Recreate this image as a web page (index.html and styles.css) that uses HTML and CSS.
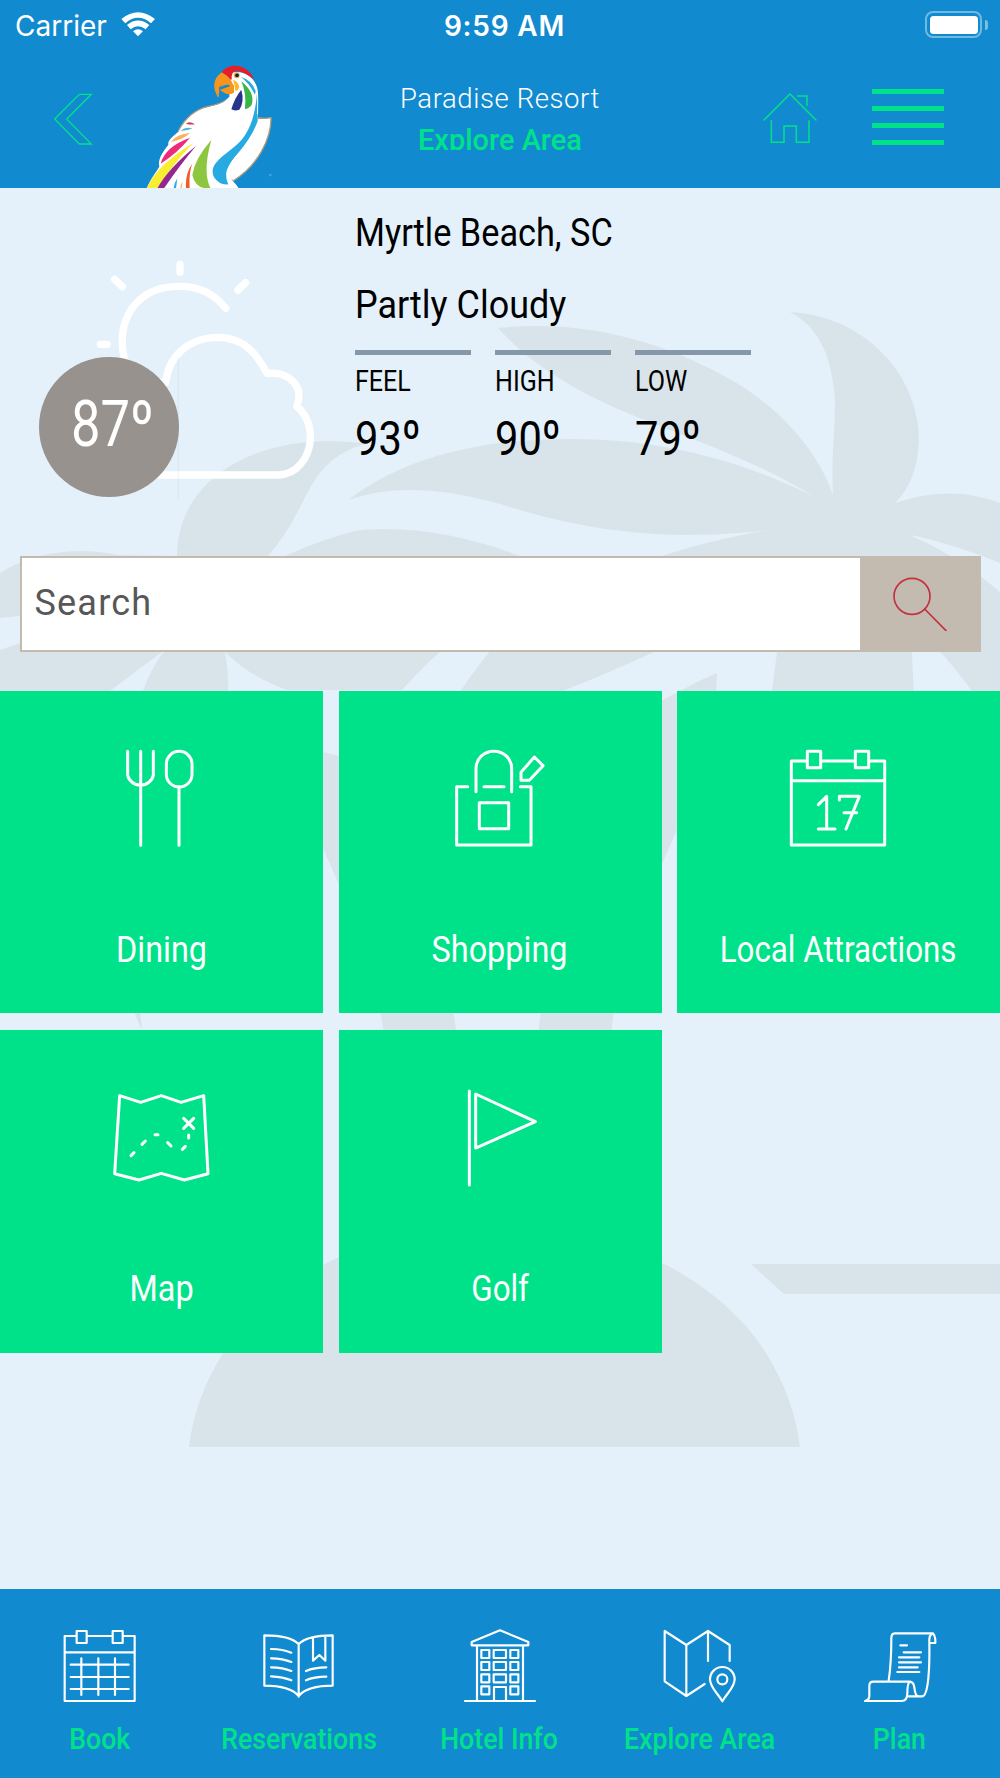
FILE: index.html
```html
<!DOCTYPE html>
<html lang="en">
<head>
<meta charset="utf-8">
<title>Explore Area</title>
<link rel="stylesheet" href="styles.css">
</head>
<body>
<div class="app">
  <svg class="backdrop" viewBox="0 0 1000 1778" aria-hidden="true">
    <!-- right palm -->
    <path d="M790 312C865 316 919 375 919 440C918 468 910 488 895 503C935 490 968 491 1000 503V563C968 550 936 540 910 535C950 553 978 573 1000 592V700H978C965 680 945 656 920 630H912V652L914 700H771L777 652V640L700 630Q630 665 555 694L540 700H455Q470 675 495 645Q560 590 662 556C705 542 750 532 795 526C755 533 720 535 690 535C620 535 560 523 500 504C440 487 390 485 348 500C390 468 440 451 500 443C620 430 720 450 815 497C760 464 715 448 650 422C575 394 528 362 498 328C590 318 672 345 735 382C785 412 820 456 833 495C831 460 835 430 835 402C832 350 815 325 790 312Z"/>
    <path d="M717 673Q700 680 682 690L662 700V864L677 830V700H716Z"/>
    <!-- left palm -->
    <path d="M177 556C178 480 250 441 330 441L368 443C320 455 310 490 297 513Q284 538 268 556H285Q320 540 355 531C410 524 470 537 520 556V600Q465 620 402 690H287Q250 677 225 652Q229 672 228 691H143Q150 670 165 650Q140 668 110 691H0V650L20 643V616L0 618V573Q22 559 45 555Q80 547 118 555Z"/>
    <path d="M323 752L339 756V885L323 848Z"/>
    <path d="M134 1010H140L142 1029Q138 1024 134 1010ZM380 1010H453L457 1035H384ZM541 1010H614L611 1035H538Z"/>
    <!-- island and shoreline -->
    <path d="M189 1447C193 1413 205 1382 223 1353C245 1317 285 1284 323 1265Q400 1225 494 1225Q589 1225 666 1265C704 1284 744 1317 766 1353C784 1382 796 1413 800 1447ZM751 1264H1000V1294H784Z"/>
  </svg>

  <header class="header">
    <div class="status">
      <div class="status-left">
        <span>Carrier</span>
        <svg class="wifi" viewBox="362 36 103 74"><path d="M363 57Q413 16 464 57L452 70Q413 37 375 70ZM380 75Q413 48 447 75L436 88Q413 70 391 88ZM398 94Q413 82 428 94L413 109Z"/></svg>
      </div>
      <div class="status-time">9:59 AM</div>
      <div class="battery"><span class="battery-body"></span><span class="battery-tip"></span></div>
    </div>
    <div class="bar">
      <svg class="back" viewBox="162 278 116 156"><path d="M164 356L238 282H274L200 356L274 431H238Z"/></svg>
      <svg class="logo" viewBox="0 0 480 415">
        <path fill="#fff" stroke="#b59a7a" stroke-width="4" d="M385 204L408 205L423 203C424 265 385 345 310 392L280 380Z"/>
        <path fill="#fff" d="M50 415C62 385 75 372 88 350C83 330 95 310 115 285C112 270 130 258 145 245C165 205 195 178 235 170C262 165 282 158 298 140L300 70C340 55 383 85 384 130C386 165 383 200 384 215L416 207C410 272 373 342 303 386C310 396 320 403 326 415Z"/>
        <path fill="none" stroke="#b59a7a" stroke-width="3.500" d="M145 242C165 205 195 178 235 169C258 164 274 160 286 151"/>
        <path fill="#ec1c24" d="M275 67C290 43 330 40 352 61Q367 73 371 88C352 72 335 63 318 62Q304 65 305 87L303 91Q291 75 275 67Z"/>
        <path fill="#f7941d" d="M275 67Q291 75 303 91L309 103Q285 92 267 113Q269 124 265 144C247 115 247 88 275 67ZM270 119Q285 114 301 108L312 104V128Q292 140 270 119Z"/>
        <path fill="#118acf" d="M271 117Q281 94 305 100L300 108Q285 110 271 117Z"/>
        <path fill="#f7941d" d="M276 103Q288 94 306 99L311 107L303 108Q288 98 272 112Z"/>
        <path fill="#fbb829" d="M309 89Q326 95 328 112Q326 120 316 123Q315 105 309 89Z"/>
        <circle cx="320" cy="76" r="9" fill="#d8b45a"/><circle cx="321" cy="76" r="5.500" fill="#222"/>
        <path fill="#27348b" d="M334 119Q344 155 328 179Q314 184 304 178Q313 145 334 119Z"/>
        <path fill="#39b54a" d="M334 94Q376 128 365 164Q357 176 345 177Q350 130 334 94Z"/>
        <path fill="#27aae1" d="M333 81Q367 91 377 124L375 134Q358 100 333 81ZM381 130C382 180 382 205 377 224C362 254 342 287 322 310C290 346 281 372 295 403Q268 406 252 382C232 340 290 314 325 280C362 244 376 190 381 130Z"/>
        <path fill="#27aae1" d="M383 190V214Q365 262 325 308Q300 335 290 360Q280 340 310 300Q360 254 383 190Z"/>
        <path fill="#c4404f" d="M168 221Q178 211 195 223Q180 225 168 221Z"/>
        <path fill="#4eb5d5" d="M152 242Q166 229 188 235Q172 243 152 242Z"/>
        <path fill="#fbb15e" d="M122 276Q140 252 180 249Q160 269 122 276Z"/>
        <path fill="#ee2a7b" d="M92 341Q105 290 180 263Q142 309 92 341Z"/>
        <path fill="#f9ed32" d="M51 415Q75 350 190 278Q126 345 82 415Z"/>
        <path fill="#92278f" d="M82 415Q115 355 198 288Q150 345 102 415Z"/>
        <path fill="#8dc63f" d="M244 270Q217 365 241 414Q197 420 187 375Q195 325 244 270Z"/>
        <path fill="#f15a29" d="M187 341Q176 370 179 415H168Q165 370 187 341Z"/>
        <path fill="#27aae1" d="M142 385Q132 400 131 415H138Z"/>
        <path fill="#fbb15e" d="M158 394Q151 405 151 415H155Z"/>
        <circle cx="421" cy="375" r="4" fill="#46a5dc"/>
      </svg>
      <div class="titles">
        <div class="resort">Paradise Resort</div>
        <div class="screen"><span class="w-screen">Explore Area</span></div>
      </div>
      <div class="actions">
        <svg class="home" viewBox="788 280 162 154"><path d="M791 361L869 283L947 361M892 289H920V317M813 363V428H851V379H888V428H926V363"/></svg>
        <div class="menu"><i></i><i></i><i></i><i></i></div>
      </div>
    </div>
  </header>

  <section class="weather">
    <div class="sky">
      <svg class="cloud" viewBox="0 0 1065 1098">
        <path d="M374 505C345 400 400 285 540 286Q626 286 677 352M540 220V244M344 265L367 287M737 275L714 297M301 460H322M470 574H497C505 500 560 440 655 439C735 440 770 490 801 547C865 540 915 585 890 646C925 675 932 715 931 745C928 800 890 851 835 852H480"/>
        <path class="seam" d="M535 500V922"/>
      </svg>
      <div class="temp"><span class="w-temp">87º</span></div>
    </div>
    <div class="report">
      <div class="line"><span class="w-place">Myrtle Beach, SC</span></div>
      <div class="line"><span class="w-sky">Partly Cloudy</span></div>
      <div class="stats">
        <div class="stat"><div class="stat-label"><span>FEEL</span></div><div class="stat-value"><span>93º</span></div></div>
        <div class="stat"><div class="stat-label"><span>HIGH</span></div><div class="stat-value"><span>90º</span></div></div>
        <div class="stat"><div class="stat-label"><span>LOW</span></div><div class="stat-value"><span>79º</span></div></div>
      </div>
    </div>
  </section>

  <div class="search">
    <div class="search-field">Search</div>
    <div class="search-button">
      <svg viewBox="1180 1160 162 163"><circle cx="1237" cy="1218" r="54"/><path d="M1275 1256L1339 1321"/></svg>
    </div>
  </div>

  <main class="tiles">
    <div class="tile">
      <svg viewBox="98 90 290 290"><path d="M142 94V165A39 36 0 0 0 219 165V94M181 94V376M296 200V376"/><rect x="258" y="94" width="77" height="107" rx="38.500"/></svg>
      <div class="tile-label"><span class="w-short">Dining</span></div>
    </div>
    <div class="tile">
      <svg viewBox="1116 90 290 290"><path d="M1188 215V145A53 51 0 0 1 1295 145V215M1163 200H1130V375H1353V200H1321M1212 200H1272M1198 248H1286V326H1198ZM1363 111L1389 137L1348 181H1323V157Z"/></svg>
      <div class="tile-label"><span class="w-short">Shopping</span></div>
    </div>
    <div class="tile">
      <svg viewBox="630 90 290 290"><path d="M682 123H634V375H914V123H867M723 123H826M634 182H914M682 94H722V143H682ZM826 94H866V143H826ZM715 254L740 229V327M715 327H765M778 240V229H838L798 327M792 278H830"/></svg>
      <div class="tile-label"><span>Local Attractions</span></div>
    </div>
    <div class="tile">
      <svg viewBox="98 90 290 290"><path d="M118 107L181 127L243 107L302 127L370 107L383 341L312 360L243 340L176 360L103 341ZM152 287L161 278M185 253L195 243M224 224H233M262 248L272 258M306 268L315 259M325 225V234M310 175L340 205M340 175L310 205"/></svg>
      <div class="tile-label"><span class="w-short">Map</span></div>
    </div>
    <div class="tile">
      <svg viewBox="1116 90 290 290"><path d="M1168 93V375M1187 102L1366 185L1187 264Z"/></svg>
      <div class="tile-label"><span>Golf</span></div>
    </div>
  </main>

  <nav class="nav">
    <div class="nav-item">
      <svg viewBox="193 150 216 216"><path d="M230 168H195V363H405V168H370M262 168H338M195 217H405M231 153H261V189H231ZM339 153H369V189H339ZM213 254H387M213 291H387M213 327H387M245 235V345M296 235V345M346 235V345"/></svg>
      <div class="nav-label"><span>Book</span></div>
    </div>
    <div class="nav-item">
      <svg viewBox="792 150 216 216"><path d="M896 350V192Q870 166 793 166V317Q870 317 896 348Q922 317 998 317V166Q922 166 896 192M939 174V242L958 225L976 242V172M813 207Q850 208 874 218M813 235Q850 236 874 246M813 262Q850 263 874 273M813 289Q850 291 874 301M918 273Q942 262 979 262M918 301Q942 290 979 290"/></svg>
      <div class="nav-label"><span>Reservations</span></div>
    </div>
    <div class="nav-item">
      <svg viewBox="1392 150 216 216"><path d="M1395 363H1605M1431 197V363M1569 197V363M1500 151L1415 186V196H1585V186ZM1482 363V321H1518V363M1444 210H1468V234H1444ZM1481 210H1518V234H1481ZM1531 210H1555V234H1531ZM1444 246H1468V270H1444ZM1481 246H1518V270H1481ZM1531 246H1555V270H1531ZM1444 283H1468V307H1444ZM1481 283H1518V307H1481ZM1531 283H1555V307H1531ZM1444 319H1468V343H1444ZM1531 319H1555V343H1531Z"/></svg>
      <div class="nav-label"><span>Hotel Info</span></div>
    </div>
    <div class="nav-item">
      <svg viewBox="493 150 216 216"><path d="M625 243V153L560 195L495 153V304L560 348L615 312M560 195V348M625 153L690 195V243M668 364C655 340 631 323 631 298A37 37 0 0 1 705 298C705 323 681 340 668 364Z"/><circle cx="668" cy="298" r="15"/></svg>
      <div class="nav-label"><span>Explore Area</span></div>
    </div>
    <div class="nav-item">
      <svg viewBox="1092 150 216 216"><path d="M1166 302Q1174 250 1174 175Q1174 160 1184 160H1296Q1307 162 1306 189H1290M1299 160Q1286 163 1288 190C1289 250 1287 349 1266 349H1226M1095 363Q1109 360 1108 345V318Q1108 305 1120 305H1228Q1241 305 1243 322Q1246 348 1254 348M1095 363H1205Q1222 363 1222 340Q1222 307 1231 305M1201 196H1221M1211 217H1263M1197 232H1258M1197 247H1263M1197 262H1253M1192 276H1258"/></svg>
      <div class="nav-label"><span>Plan</span></div>
    </div>
  </nav>
</div>
</body>
</html>
```
FILE: styles.css
```css
* { box-sizing: border-box; }

body {
  margin: 0;
  font-family: Roboto, "Liberation Sans", sans-serif;
}

.app {
  position: relative;
  width: 1000px;
  height: 1778px;
  display: flex;
  flex-direction: column;
  background: #e4f1fa;
  overflow: hidden;
}

.app > * { position: relative; }

.app > .backdrop {
  position: absolute;
  inset: 0;
  width: 1000px;
  height: 1778px;
  fill: #d9e4ea;
}

span { display: inline-block; white-space: nowrap; }

/* header */
.header {
  height: 188.400px;
  background: #118acf;
  color: #fff;
}

.status {
  height: 51px;
  display: grid;
  grid-template-columns: 1fr auto 1fr;
  align-items: center;
  padding: 0 12px 0 15px;
  font: 400 28px/52px Inter, sans-serif;
}

.status-left { display: flex; align-items: center; gap: 14px; }
.wifi { width: 34.300px; height: 24.700px; fill: #fff; margin-top: -3px; }
.status-time { font-weight: 600; letter-spacing: 0.8px; margin-left: 6px; }

.battery { display: flex; align-items: center; justify-content: flex-end; gap: 3px; margin-top: -3px; }
.battery-body {
  width: 57px;
  height: 27px;
  border: 2px solid rgba(255, 255, 255, .4);
  border-radius: 8px;
  padding: 2.500px;
}
.battery-body::before {
  content: "";
  display: block;
  height: 100%;
  border-radius: 3.500px;
  background: #fff;
}
.battery-tip { width: 3px; height: 10px; border-radius: 0 4px 4px 0; background: rgba(255, 255, 255, .45); }

.bar {
  height: 137.400px;
  display: grid;
  grid-template-columns: 130px 160px 420px 290px;
  align-items: start;
}

.back, .home { fill: none; stroke: #00e289; stroke-width: 4; }
.back { width: 38.700px; height: 52px; margin: 41.700px 0 0 54px; }
.home { width: 54px; height: 51.300px; stroke-width: 4.500; stroke-linecap: round; }
.logo { width: 160px; height: 138.400px; margin-top: -1px; }

.titles { padding-top: 27px; text-align: center; }
.resort { font-size: 27.500px; line-height: 41px; letter-spacing: .6px; font-weight: 300; }
.screen {
  height: 31px;
  overflow: hidden;
  color: #00e289;
  font-size: 30px;
  line-height: 41px;
  font-weight: 500;
}
.w-screen { transform: scaleX(.965); }

.actions { display: flex; gap: 55.500px; padding: 42px 0 0 52.700px; }
.menu { width: 72px; margin-top: -4px; display: flex; flex-direction: column; gap: 12px; }
.menu i { height: 5px; background: #00e289; }

/* weather */
.weather { height: 367.600px; display: grid; grid-template-columns: 355px 1fr; }
.sky { position: relative; height: 367.600px; }
.cloud {
  width: 355px;
  height: 366px;
  margin-top: 2.400px;
  fill: none;
  stroke: #fff;
  stroke-width: 22;
  stroke-linecap: round;
  stroke-linejoin: round;
}
.cloud .seam { stroke: rgba(120, 130, 140, .15); stroke-width: 2; }
.temp {
  position: absolute;
  left: 39px;
  top: 169px;
  width: 140px;
  height: 140px;
  border-radius: 50%;
  background: #97928d;
  color: #fff;
  font-size: 64px;
  line-height: 135px;
  padding-left: 7px;
  text-align: center;
}
.w-temp { transform: scaleX(.82); margin: 0 -20px; }

.report { padding-top: 9px; color: #000; }
.line { font-size: 39.500px; line-height: 72px; }
.line span, .stat span { transform-origin: 0 50%; }
.w-place { transform: scaleX(.868); }
.w-sky { transform: scaleX(.91); }
.stats { display: flex; gap: 24px; margin-top: 8.500px; }
.stat { width: 116px; border-top: 5px solid #8598a9; }
.stat-label { font-size: 29.500px; line-height: 52px; }
.stat-label span { transform: scaleX(.85); }
.stat-value { font-size: 49px; line-height: 64px; }
.stat-value span { transform: scaleX(.85); }

/* search */
.search {
  height: 96px;
  margin: 0 19.500px;
  display: grid;
  grid-template-columns: 1fr 119px;
  border: 2px solid #c3bbb0;
  background: #fff;
}
.search-field {
  padding-left: 13px;
  font-size: 36px;
  line-height: 91px;
  letter-spacing: 1.200px;
  color: #575757;
}
.search-button { background: #c3bbb0; padding: 19px 0 0 33.500px; }
.search-button svg { width: 54px; height: 54.300px; fill: none; stroke: #c4303f; stroke-width: 5; stroke-linecap: round; }

/* tiles */
.tiles {
  margin-top: 38.700px;
  display: grid;
  grid-template-columns: 323px 323px 323px;
  justify-content: space-between;
  row-gap: 17px;
  grid-auto-rows: 322.700px;
}
.tile {
  background: #00e289;
  display: flex;
  flex-direction: column;
  align-items: center;
  padding-top: 59.300px;
}
.tile svg {
  width: 96.700px;
  height: 96.700px;
  overflow: visible;
  fill: none;
  stroke: #fff;
  stroke-width: 9;
  stroke-linecap: round;
  stroke-linejoin: round;
}
.tile-label {
  margin-top: 73px;
  color: #fff;
  font-size: 36px;
  line-height: 60px;
}
.tile-label span { transform: scaleX(.87); }
.tile-label .w-short { transform: scaleX(.9); }

/* bottom navigation */
.nav {
  margin-top: auto;
  height: 188.700px;
  background: #118acf;
  display: grid;
  grid-template-columns: repeat(5, 1fr);
}
.nav-item {
  display: flex;
  flex-direction: column;
  align-items: center;
  padding-top: 40.700px;
}
.nav-item svg {
  width: 72px;
  height: 72px;
  overflow: visible;
  fill: none;
  stroke: #fff;
  stroke-width: 6.500;
  stroke-linecap: round;
  stroke-linejoin: round;
}
.nav-label {
  margin: 17px 0 0 -1px;
  font-size: 29.500px;
  line-height: 41px;
  font-weight: 500;
  color: #00e289;
}
.nav-label span { transform: scaleX(.905); }
```
